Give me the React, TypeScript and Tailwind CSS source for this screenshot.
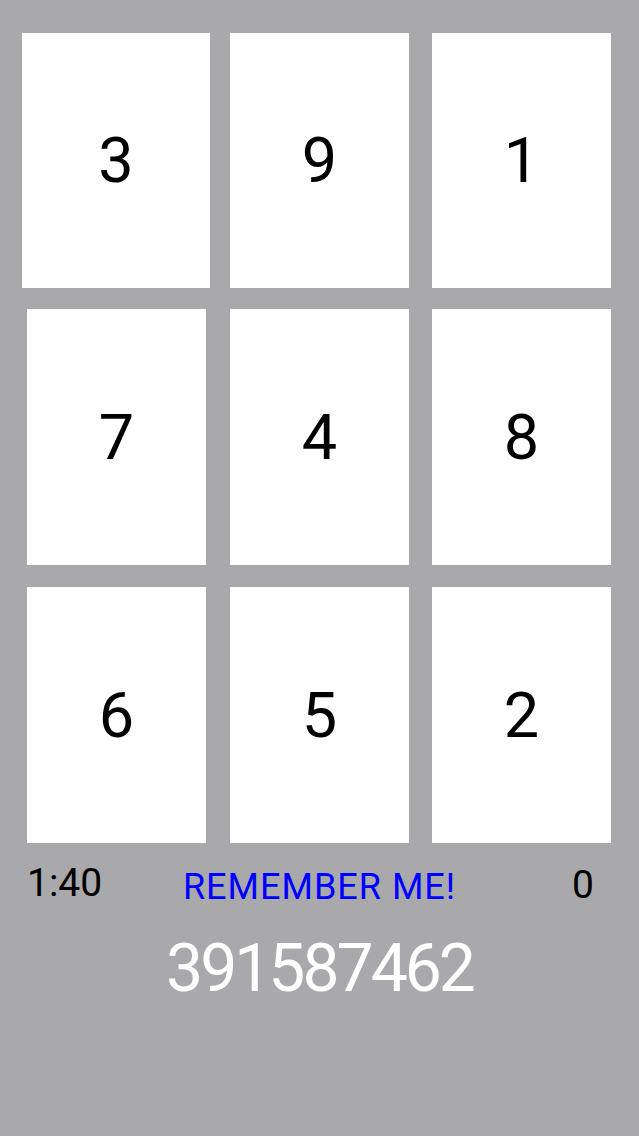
import React from "react";

const font = { fontFamily: "Roboto, 'Open Sans', sans-serif" };

function Card({ n, cls }: { n: string; cls: string }) {
  return (
    <div className={`bg-white flex items-center justify-center text-black text-[63px] leading-none ${cls}`}>
      {n}
    </div>
  );
}

export default function App() {
  return (
    <div className="min-h-[1136px] w-full bg-[#a9a8aa] pt-[33px]" style={font}>
      <div className="flex h-[255px]">
        <Card n="3" cls="ml-[22px] w-[188px]" />
        <Card n="9" cls="ml-[20px] w-[179px]" />
        <Card n="1" cls="ml-[23px] w-[179px]" />
      </div>
      <div className="flex h-[256px] mt-[21px]">
        <Card n="7" cls="ml-[27px] w-[179px]" />
        <Card n="4" cls="ml-[24px] w-[179px]" />
        <Card n="8" cls="ml-[23px] w-[179px]" />
      </div>
      <div className="flex h-[256px] mt-[22px]">
        <Card n="6" cls="ml-[27px] w-[179px]" />
        <Card n="5" cls="ml-[24px] w-[179px]" />
        <Card n="2" cls="ml-[23px] w-[179px]" />
      </div>
      <div className="grid grid-cols-[1fr_auto_1fr] items-start mt-[21px]">
        <div className="pl-[27px] text-[39px] leading-none text-black">1:40</div>
        <div className="mt-[5px] text-[36px] leading-none text-[#0000ff] tracking-[1px]">REMEMBER ME!</div>
        <div className="mt-[2px] pr-[45px] text-right text-[39px] leading-none text-black">0</div>
      </div>
      <div className="mt-[31px] text-center text-white text-[66px] leading-none tracking-[-3px]">391587462</div>
    </div>
  );
}
